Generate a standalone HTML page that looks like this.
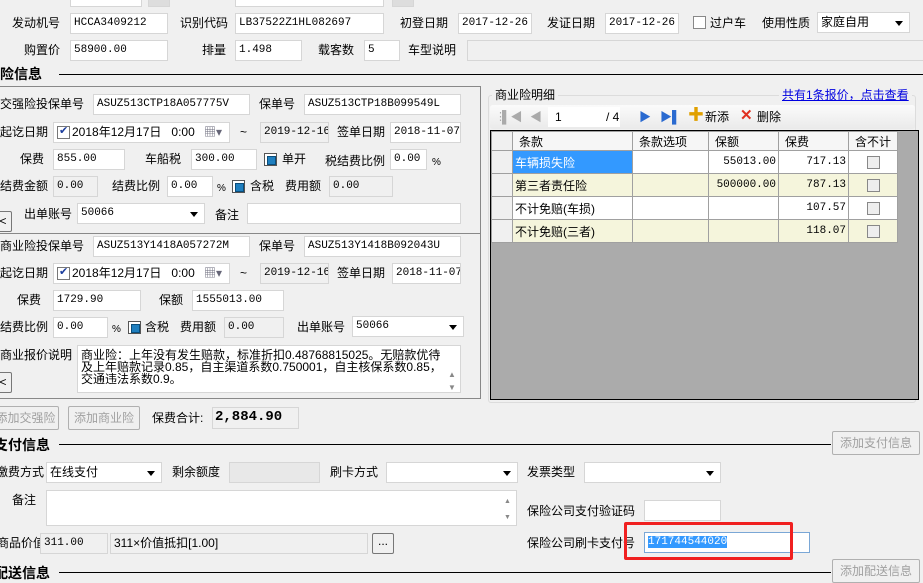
<!DOCTYPE html>
<html><head><meta charset="utf-8"><style>
*{box-sizing:border-box;margin:0;padding:0}
body{width:923px;height:583px;overflow:hidden;background:#f0f0f0;position:relative;font-family:"Liberation Sans","Noto Sans CJK SC",sans-serif;font-size:12px;color:#000}
.l{position:absolute;white-space:nowrap;line-height:16px;font-size:12px}
.i{position:absolute;height:21px;background:#fff;border:1px solid #d6d6d6;font-family:"Liberation Mono","Noto Sans CJK SC",monospace;font-size:11px;line-height:19px;padding-left:3px;white-space:nowrap;overflow:hidden}
.g{background:#f0f0f0}
.s::after{content:"";position:absolute;right:6px;top:8px;border:4px solid transparent;border-top:5px solid #000;border-bottom:0}
.cb{position:absolute;width:13px;height:13px;border:1px solid #555;background:#fff}
.cb.f::after{content:"";position:absolute;left:2px;top:2px;width:7px;height:7px;background:#1f7fbf;border:1px solid #0a4d7a}
.cb.k::after{content:"✔";position:absolute;left:1px;top:-3px;font-size:11px;color:#1a3c9c}
.b{font-weight:bold}
.hl{position:absolute;height:1px;background:#000}
.btn{position:absolute;border:1px solid #b0b0b0;border-radius:2px;background:#f0f0f0;color:#a0a0a0;text-align:center;line-height:22px;white-space:nowrap;overflow:hidden;font-size:12px}
table{border-collapse:collapse;position:absolute;left:491px;top:131px;font-size:12px}
td{border:1px solid #a0a0a0;height:23px;padding:0 2px;white-space:nowrap}
td.r{text-align:right;font-family:"Liberation Mono",monospace;font-size:11px}
tr.y td{background:#f5f5dc}
tr.w td{background:#fff}
.hd td{background:#f6f6f6;height:19px;padding-left:6px}
td.rh{background:#f0f0f0 !important;width:21px}
.mc{display:inline-block;width:13px;height:13px;border:1px solid #888;background:#eee;vertical-align:middle}
.sf{font-family:"Liberation Sans","Noto Sans CJK SC",sans-serif;font-size:12px}
</style></head><body>
<div class="i" style="left:70px;top:-14px;width:72px"></div>
<div class="i" style="left:148px;top:-14px;width:22px;background:#ddd"></div>
<div class="i" style="left:235px;top:-14px;width:149px"></div>
<div class="i" style="left:392px;top:-14px;width:22px;background:#ddd"></div>

<div class="l" style="left:12px;top:15px">发动机号</div><div class="i" style="left:70px;top:13px;width:98px">HCCA3409212</div>
<div class="l" style="left:180px;top:15px">识别代码</div><div class="i" style="left:235px;top:13px;width:149px">LB37522Z1HL082697</div>
<div class="l" style="left:400px;top:15px">初登日期</div><div class="i" style="left:458px;top:13px;width:74px">2017-12-26</div>
<div class="l" style="left:547px;top:15px">发证日期</div><div class="i" style="left:605px;top:13px;width:74px">2017-12-26</div>
<div class="cb" style="left:693px;top:16px;border-color:#888"></div><div class="l" style="left:710px;top:15px">过户车</div>
<div class="l" style="left:762px;top:15px">使用性质</div><div class="i s sf" style="left:817px;top:12px;width:93px">家庭自用</div>

<div class="l" style="left:24px;top:42px">购置价</div><div class="i" style="left:70px;top:40px;width:98px">58900.00</div>
<div class="l" style="left:202px;top:42px">排量</div><div class="i" style="left:235px;top:40px;width:67px">1.498</div>
<div class="l" style="left:318px;top:42px">载客数</div><div class="i" style="left:364px;top:40px;width:36px">5</div>
<div class="l" style="left:408px;top:42px">车型说明</div><div class="i g" style="left:467px;top:40px;width:460px"></div>

<div class="l b" style="left:0;top:66px;font-size:14px">险信息</div><div class="hl" style="left:59px;top:74px;width:864px"></div>

<div style="position:absolute;left:-2px;top:86px;width:483px;height:313px;border:1px solid #888;border-left:0"></div>
<div class="hl" style="left:0;top:233px;width:480px;background:#888"></div>

<div class="l" style="left:0;top:96px">交强险投保单号</div><div class="i" style="left:93px;top:94px;width:157px">ASUZ513CTP18A057775V</div>
<div class="l" style="left:259px;top:96px">保单号</div><div class="i" style="left:304px;top:94px;width:157px">ASUZ513CTP18B099549L</div>

<div class="l" style="left:0;top:124px">起讫日期</div>
<div class="i sf" style="left:53px;top:122px;width:177px;padding-left:18px">2018年12月17日&nbsp;&nbsp;&nbsp;0:00</div>
<div class="cb k" style="left:57px;top:126px;border-color:#777"></div>
<div class="l" style="left:204px;top:124px;color:#667">▦▾</div>
<div class="l" style="left:240px;top:124px">~</div>
<div class="i g" style="left:260px;top:122px;width:69px">2019-12-16</div>
<div class="l" style="left:337px;top:124px">签单日期</div><div class="i" style="left:390px;top:122px;width:71px">2018-11-07</div>

<div class="l" style="left:20px;top:151px">保费</div><div class="i" style="left:53px;top:149px;width:72px">855.00</div>
<div class="l" style="left:145px;top:151px">车船税</div><div class="i" style="left:191px;top:149px;width:66px">300.00</div>
<div class="cb f" style="left:264px;top:153px"></div><div class="l" style="left:282px;top:151px">单开</div>
<div class="l" style="left:325px;top:153px">税结费比例</div><div class="i" style="left:390px;top:149px;width:37px">0.00</div><div class="l" style="left:432px;top:155px;font-size:10px">%</div>

<div class="l" style="left:0;top:178px">结费金额</div><div class="i g" style="left:53px;top:176px;width:45px">0.00</div>
<div class="l" style="left:112px;top:178px">结费比例</div><div class="i" style="left:167px;top:176px;width:46px">0.00</div><div class="l" style="left:217px;top:181px;font-size:10px">%</div>
<div class="cb f" style="left:232px;top:180px"></div><div class="l" style="left:250px;top:178px">含税</div>
<div class="l" style="left:285px;top:178px">费用额</div><div class="i g" style="left:329px;top:176px;width:64px">0.00</div>

<div class="btn" style="left:-6px;top:211px;width:18px;height:21px;color:#000;line-height:19px;border-color:#777">&lt;</div>
<div class="l" style="left:24px;top:206px">出单账号</div><div class="i s" style="left:77px;top:203px;width:128px">50066</div>
<div class="l" style="left:215px;top:207px">备注</div><div class="i" style="left:247px;top:203px;width:214px"></div>

<div class="l" style="left:0;top:238px">商业险投保单号</div><div class="i" style="left:93px;top:236px;width:157px">ASUZ513Y1418A057272M</div>
<div class="l" style="left:259px;top:238px">保单号</div><div class="i" style="left:304px;top:236px;width:157px">ASUZ513Y1418B092043U</div>

<div class="l" style="left:0;top:265px">起讫日期</div>
<div class="i sf" style="left:53px;top:263px;width:177px;padding-left:18px">2018年12月17日&nbsp;&nbsp;&nbsp;0:00</div>
<div class="cb k" style="left:57px;top:267px;border-color:#777"></div>
<div class="l" style="left:204px;top:265px;color:#667">▦▾</div>
<div class="l" style="left:240px;top:265px">~</div>
<div class="i g" style="left:260px;top:263px;width:69px">2019-12-16</div>
<div class="l" style="left:337px;top:265px">签单日期</div><div class="i" style="left:392px;top:263px;width:69px">2018-11-07</div>

<div class="l" style="left:17px;top:292px">保费</div><div class="i" style="left:53px;top:290px;width:88px">1729.90</div>
<div class="l" style="left:159px;top:292px">保额</div><div class="i" style="left:192px;top:290px;width:92px">1555013.00</div>

<div class="l" style="left:0;top:319px">结费比例</div><div class="i" style="left:53px;top:317px;width:55px">0.00</div><div class="l" style="left:112px;top:322px;font-size:10px">%</div>
<div class="cb f" style="left:128px;top:321px"></div><div class="l" style="left:145px;top:319px">含税</div>
<div class="l" style="left:180px;top:319px">费用额</div><div class="i g" style="left:224px;top:317px;width:60px">0.00</div>
<div class="l" style="left:297px;top:319px">出单账号</div><div class="i s" style="left:352px;top:316px;width:112px">50066</div>

<div class="l" style="left:0;top:347px">商业报价说明</div>
<div class="i sf" style="left:77px;top:345px;width:384px;height:48px;white-space:normal;line-height:12px;padding:3px 16px 0 3px">商业险：上年没有发生赔款，标准折扣0.48768815025。无赔款优待及上年赔款记录0.85，自主渠道系数0.750001，自主核保系数0.85，交通违法系数0.9。</div>
<div class="l" style="left:448px;top:367px;font-size:8px;color:#888">▲</div><div class="l" style="left:448px;top:380px;font-size:8px;color:#888">▼</div>
<div class="btn" style="left:-6px;top:372px;width:18px;height:21px;color:#000;line-height:19px;border-color:#777">&lt;</div>

<div class="btn" style="left:-8px;top:406px;width:67px;height:24px">添加交强险</div>
<div class="btn" style="left:68px;top:406px;width:72px;height:24px">添加商业险</div>
<div class="l" style="left:152px;top:410px">保费合计:</div>
<div class="i g" style="left:212px;top:407px;width:87px;height:22px;font-weight:bold;font-size:14px;padding-left:2px">2,884.90</div>

<div style="position:absolute;left:488px;top:95px;width:428px;height:308px;border:1px solid #dcdcdc;border-radius:3px"></div>
<div class="l" style="left:492px;top:87px;background:#f0f0f0;padding:0 3px">商业险明细</div>
<div class="l" style="left:779px;top:87px;color:#0000e0;text-decoration:underline;background:#f0f0f0;padding:0 3px">共有1条报价，点击查看</div>
<div style="position:absolute;left:490px;top:105px;width:425px;height:24px;background:linear-gradient(#fbfbfb,#eaeaea);border-radius:3px"></div>
<div class="l" style="left:495px;top:109px;color:#aaa;font-size:11px">⋮</div>
<div class="l" style="left:502px;top:109px;color:#aaa;font-size:12px">▌◀</div>
<div class="l" style="left:530px;top:109px;color:#aaa;font-size:12px">◀</div>
<div style="position:absolute;left:548px;top:107px;width:72px;height:20px;background:#fff"></div>
<div class="l" style="left:555px;top:109px">1</div>
<div class="l" style="left:606px;top:109px">/ 4</div>
<div class="l" style="left:639px;top:109px;color:#2a6ad0;font-size:12px">▶</div>
<div class="l" style="left:660px;top:109px;color:#2a6ad0;font-size:12px">▶▌</div>
<div class="l b" style="left:688px;top:108px;color:#e0a000;font-size:16px">✚</div><div class="l" style="left:705px;top:109px">新添</div>
<div class="l b" style="left:740px;top:108px;color:#e03020;font-size:15px">✕</div><div class="l" style="left:757px;top:109px">删除</div>
<div style="position:absolute;left:490px;top:130px;width:429px;height:270px;background:#ababab;border:1px solid #000"></div>
<table>
<tr class="hd"><td class="rh"></td><td style="width:120px">条款</td><td style="width:76px">条款选项</td><td style="width:70px">保额</td><td style="width:70px">保费</td><td style="width:49px;text-align:center;padding:0">含不计</td></tr>
<tr class="w"><td class="rh"></td><td style="background:#3399ff;color:#fff">车辆损失险</td><td></td><td class="r">55013.00</td><td class="r">717.13</td><td style="text-align:center"><span class="mc"></span></td></tr>
<tr class="y"><td class="rh"></td><td>第三者责任险</td><td></td><td class="r">500000.00</td><td class="r">787.13</td><td style="text-align:center"><span class="mc"></span></td></tr>
<tr class="w"><td class="rh"></td><td>不计免赔(车损)</td><td></td><td></td><td class="r">107.57</td><td style="text-align:center"><span class="mc"></span></td></tr>
<tr class="y"><td class="rh"></td><td>不计免赔(三者)</td><td></td><td></td><td class="r">118.07</td><td style="text-align:center"><span class="mc"></span></td></tr>
</table>

<div class="l b" style="left:-6px;top:437px;font-size:14px">支付信息</div><div class="hl" style="left:59px;top:444px;width:772px"></div>
<div class="btn" style="left:832px;top:431px;width:88px;height:24px">添加支付信息</div>

<div class="l" style="left:-4px;top:464px">缴费方式</div><div class="i s sf" style="left:46px;top:462px;width:116px">在线支付</div>
<div class="l" style="left:172px;top:464px">剩余额度</div><div class="i g" style="left:229px;top:462px;width:91px;background:#e8e8e8"></div>
<div class="l" style="left:330px;top:464px">刷卡方式</div><div class="i s" style="left:386px;top:462px;width:132px"></div>
<div class="l" style="left:527px;top:464px">发票类型</div><div class="i s" style="left:584px;top:462px;width:137px"></div>

<div class="l" style="left:12px;top:492px">备注</div><div class="i" style="left:46px;top:490px;width:471px;height:36px"></div>
<div class="l" style="left:504px;top:494px;font-size:7px;color:#888">▲</div><div class="l" style="left:504px;top:510px;font-size:7px;color:#888">▼</div>
<div class="l" style="left:527px;top:503px">保险公司支付验证码</div><div class="i" style="left:644px;top:500px;width:77px"></div>

<div class="l" style="left:-3px;top:535px">商品价值</div><div class="i g" style="left:40px;top:533px;width:68px">311.00</div>
<div class="i g sf" style="left:110px;top:533px;width:258px">311×价值抵扣[1.00]</div>
<div class="btn" style="left:372px;top:533px;width:22px;height:21px;color:#000;line-height:14px;border-color:#777">...</div>
<div class="l" style="left:527px;top:535px">保险公司刷卡支付号</div>
<div class="i" style="left:644px;top:532px;width:166px;border-color:#7aa7d6"><span style="background:#3399ff;color:#fff">171744544020</span></div>
<div style="position:absolute;left:624px;top:522px;width:169px;height:38px;border:3px solid #f02020;border-radius:2px"></div>

<div class="l b" style="left:-6px;top:565px;font-size:14px">配送信息</div><div class="hl" style="left:59px;top:572px;width:772px"></div>
<div class="btn" style="left:832px;top:559px;width:88px;height:24px">添加配送信息</div>
</body></html>
